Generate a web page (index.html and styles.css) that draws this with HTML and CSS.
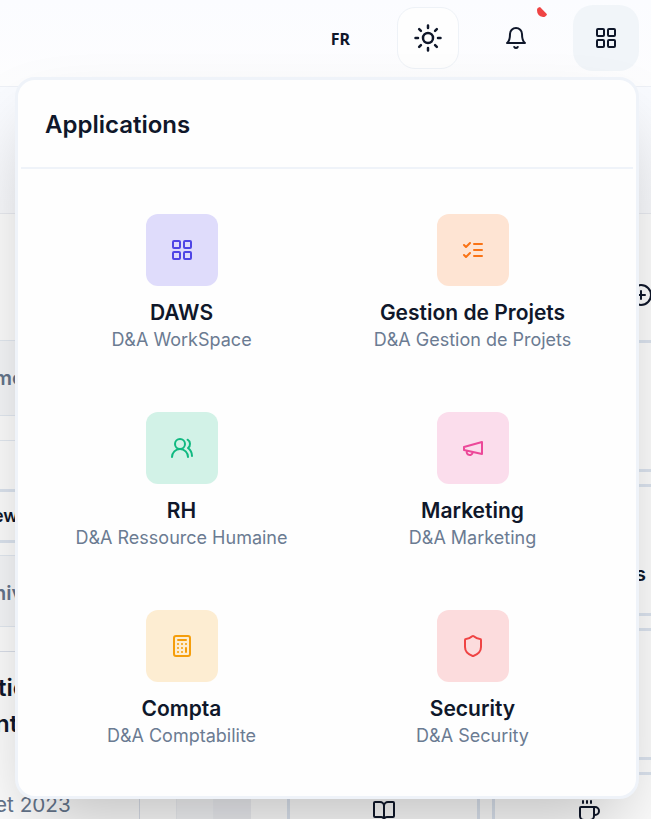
FILE: index.html
```html
<!DOCTYPE html>
<html lang="fr">
<head>
<meta charset="utf-8">
<title>Applications</title>
<link rel="stylesheet" href="styles.css">
</head>
<body>
<header class="topbar">
  <span class="lang">FR</span>
  <button class="btn sun"><svg class="icon" viewBox="0 0 24 24"><circle cx="12" cy="12" r="4"/><path d="M12 2v2M12 20v2M4.93 4.93l1.41 1.41M17.66 17.66l1.41 1.41M2 12h2M20 12h2M6.34 17.66l-1.41 1.41M19.07 4.93l-1.41 1.41"/></svg></button>
  <button class="btn bell"><svg class="icon" viewBox="0 0 24 24"><path d="M6 8a6 6 0 0 1 12 0c0 7 3 9 3 9H3s3-2 3-9M10.3 21a1.94 1.94 0 0 0 3.4 0"/></svg><svg class="badge" viewBox="0 0 10 10"><path d="M3 0L10 7.2Q9 10 6 10Q0 9 0 3Q0 .5 3 0Z"/></svg></button>
  <button class="btn apps"><svg class="icon" viewBox="0 0 24 24"><rect x="3" y="3" width="7" height="7" rx="1"/><rect x="14" y="3" width="7" height="7" rx="1"/><rect x="14" y="14" width="7" height="7" rx="1"/><rect x="3" y="14" width="7" height="7" rx="1"/></svg></button>
</header>
<div class="hero"></div>
<main class="content">
  <section class="side">
    <div class="gap-a"></div>
    <div class="head head-a">me</div>
    <div class="gap-b"></div>
    <div class="field">ew</div>
    <div class="head head-b">niv</div>
    <div class="gap-c"></div>
    <div class="heading"><span>tic</span><span>nt</span></div>
    <div class="date">et 2023</div>
  </section>
  <div class="strips"><i></i><i></i></div>
  <section class="board">
    <div class="board-head"><svg class="icon" viewBox="0 0 24 24"><circle cx="12" cy="12" r="10"/><path d="M8 12h8M12 8v8"/></svg></div>
    <div class="cards">
      <div class="card"></div><div class="card"></div>
      <div class="card"></div><div class="card"><span class="label">s</span></div>
      <div class="card"></div><div class="card"></div>
      <div class="card"><svg class="icon" viewBox="0 0 24 24"><path d="M12 7v14M3 18a1 1 0 0 1-1-1V4a1 1 0 0 1 1-1h5a4 4 0 0 1 4 4 4 4 0 0 1 4-4h5a1 1 0 0 1 1 1v13a1 1 0 0 1-1 1h-6a3 3 0 0 0-3 3 3 3 0 0 0-3-3z"/></svg></div>
      <div class="card"><svg class="icon" viewBox="0 0 24 24"><path d="M10 2v2M14 2v2M16 8a1 1 0 0 1 1 1v8a4 4 0 0 1-4 4H7a4 4 0 0 1-4-4V9a1 1 0 0 1 1-1h14a4 4 0 1 1 0 8h-1M6 2v2"/></svg></div>
    </div>
  </section>
</main>
<div class="menu">
  <h2 class="menu-title">Applications</h2>
  <div class="grid">
    <a class="app"><span class="tile indigo"><svg class="icon" viewBox="0 0 24 24"><rect x="3" y="3" width="7" height="7" rx="1"/><rect x="14" y="3" width="7" height="7" rx="1"/><rect x="14" y="14" width="7" height="7" rx="1"/><rect x="3" y="14" width="7" height="7" rx="1"/></svg></span><b>DAWS</b><small>D&amp;A WorkSpace</small></a>
    <a class="app"><span class="tile orange"><svg class="icon" viewBox="0 0 24 24"><path d="m3 17 2 2 4-4M3 7l2 2 4-4M13 6h8M13 12h8M13 18h8"/></svg></span><b>Gestion de Projets</b><small>D&amp;A Gestion de Projets</small></a>
    <a class="app"><span class="tile green"><svg class="icon" viewBox="0 0 24 24"><path d="M18 21a8 8 0 0 0-16 0"/><circle cx="10" cy="8" r="5"/><path d="M22 20c0-3.37-2-6.5-4-8a5 5 0 0 0-.45-8.3"/></svg></span><b>RH</b><small>D&amp;A Ressource Humaine</small></a>
    <a class="app"><span class="tile pink"><svg class="icon" viewBox="0 0 24 24"><path d="m3 11 18-5v12L3 14v-3zM11.6 16.8a3 3 0 1 1-5.8-1.6"/></svg></span><b>Marketing</b><small>D&amp;A Marketing</small></a>
    <a class="app"><span class="tile amber"><svg class="icon" viewBox="0 0 24 24"><rect x="4" y="2" width="16" height="20" rx="2"/><path d="M8 6h8M16 14v4M16 10h.01M12 10h.01M8 10h.01M12 14h.01M8 14h.01M12 18h.01M8 18h.01"/></svg></span><b>Compta</b><small>D&amp;A Comptabilite</small></a>
    <a class="app"><span class="tile red"><svg class="icon" viewBox="0 0 24 24"><path d="M20 13c0 5-3.5 7.5-7.66 8.95a1 1 0 0 1-.67-.01C7.5 20.5 4 18 4 13V6a1 1 0 0 1 1-1c2 0 4.5-1.2 6.24-2.72a1.17 1.17 0 0 1 1.52 0C14.51 3.81 17 5 19 5a1 1 0 0 1 1 1z"/></svg></span><b>Security</b><small>D&amp;A Security</small></a>
  </div>
</div>
</body>
</html>
```
FILE: styles.css
```css
* { box-sizing: border-box; }
body {
  margin: 0;
  height: 819px;
  overflow: hidden;
  position: relative;
  background: #fcfcfc;
  color: #0f172a;
  font-family: Inter, "Liberation Sans", sans-serif;
}
.icon {
  display: block;
  width: 24px;
  height: 24px;
  fill: none;
  stroke: currentColor;
  stroke-width: 2;
  stroke-linecap: round;
  stroke-linejoin: round;
  flex: none;
}
.topbar {
  height: 87px;
  padding: 5px 12px 0 0;
  display: flex;
  justify-content: flex-end;
  align-items: flex-start;
  background: linear-gradient(#fbfcff, #fdfdfe);
  border-bottom: 1px solid #edf0f6;
}
.lang {
  margin-right: 47px;
  font: 700 16px/66px "Noto Sans", sans-serif;
  padding-top: 1px;
}
.btn {
  padding: 0;
  border: 0;
  background: none;
  color: inherit;
  display: flex;
  align-items: center;
  justify-content: center;
}
.sun {
  width: 62px;
  height: 62px;
  margin-top: 2px;
  border: 1px solid #eef2f7;
  border-radius: 18px;
  background: #fefefe;
}
.sun .icon { width: 30px; height: 30px; }
.bell { width: 66px; height: 66px; margin: 0 24px; position: relative; }
.badge { position: absolute; left: 54px; top: 2px; width: 10px; height: 10px; fill: #ef4444; }
.apps { width: 66px; height: 66px; border-radius: 20px; background: #f1f5f9; }

.hero {
  height: 127px;
  background: linear-gradient(#f9fbff, #f8f9fc);
  border-bottom: 1px solid #e8eaf0;
}
.content { height: 605px; display: flex; overflow: hidden; }
.side {
  width: 140px;
  flex: none;
  border-right: 1px solid #d9dee8;
  overflow: hidden;
}
.gap-a { height: 126px; }
.head {
  background: #f5f6f8;
  border-top: 1px solid #e2e8f0;
  border-bottom: 1px solid #e2e8f0;
  color: #64748b;
  font-weight: 600;
  font-size: 20px;
  white-space: nowrap;
}
.head-a { height: 76px; line-height: 75px; text-indent: -6px; }
.head-b { height: 72px; line-height: 74px; text-indent: -6px; }
.gap-b { height: 73px; background: linear-gradient(#e2e8f0, #e2e8f0) 0 24px / 100% 1px no-repeat; }
.field {
  height: 54px;
  margin-bottom: 12px;
  border: solid #dbe3ee;
  border-width: 3px 0;
  font: 600 18px/48px Inter, sans-serif;
  text-indent: -7px;
}
.gap-c { height: 25px; border-bottom: 1px solid #d9dee8; }
.heading {
  height: 127px;
  padding-top: 18px;
  display: flex;
  flex-direction: column;
  font: 600 24px/36px Inter, sans-serif;
}
.heading span { margin-left: -2px; }
.heading span:last-child { margin-left: -5px; }
.date { padding-top: 11px; margin-left: -5px; font-size: 20.7px; line-height: 30px; color: #64748b; }
.strips { width: 147px; flex: none; padding-left: 36px; display: flex; }
.strips i { width: 37px; background: #f3f4f6; border-left: 1px solid #eceef2; }
.strips i + i { width: 38px; background: #ecedf1; }
.board { flex: none; width: 398px; }
.board-head { height: 126px; padding: 69px 32px 0 0; display: flex; justify-content: flex-end; }
.cards { display: grid; grid-template-columns: 193px 193px; grid-auto-rows: 132px; gap: 12px; }
.card {
  border: 3px solid #dbe3ee;
  padding: 24px 0;
  display: flex;
  flex-direction: column;
  align-items: center;
}
.label { margin: 51px 0 0 104px; font: 600 20px/24px Inter, sans-serif; }

.menu {
  position: absolute;
  left: 15px;
  top: 77px;
  width: 624px;
  height: 722px;
  border: 3px solid #eff3f9;
  border-radius: 20px;
  background: #fefefe;
  box-shadow: 0 37px 75px -18px rgba(0, 0, 0, .25);
}
.menu-title {
  margin: 0 3px;
  height: 89px;
  padding-left: 24px;
  border-bottom: 2px solid #eff3f9;
  font-size: 24px;
  font-weight: 600;
  line-height: 90px;
}
.grid { padding: 18px; display: grid; grid-template-columns: 1fr 1fr; grid-auto-rows: 198px; }
.app { padding-top: 27px; display: flex; flex-direction: column; align-items: center; }
.tile {
  width: 72px;
  height: 72px;
  margin-bottom: 12px;
  border-radius: 12px;
  display: grid;
  place-items: center;
}
.app b { font-size: 21px; font-weight: 600; line-height: 30px; }
.app small { font-size: 18px; line-height: 24px; color: #6b7b92; }
.indigo { background: #dfdcfb; color: #4f46e5; }
.orange { background: #fee4d3; color: #f97316; }
.green { background: #d2f2e7; color: #10b981; }
.pink { background: #fbddec; color: #ec4899; }
.amber { background: #fdedd2; color: #f59e0b; }
.red { background: #fcdcdd; color: #ef4444; }
```
